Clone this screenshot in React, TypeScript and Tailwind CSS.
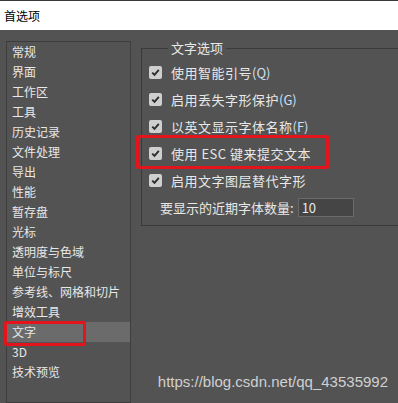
import React from 'react';

const font = { fontFamily: '"Microsoft YaHei", "Noto Sans CJK SC", "Noto Sans", sans-serif' };

const listItems = [
  '常规',
  '界面',
  '工作区',
  '工具',
  '历史记录',
  '文件处理',
  '导出',
  '性能',
  '暂存盘',
  '光标',
  '透明度与色域',
  '单位与标尺',
  '参考线、网格和切片',
  '增效工具',
  '文字',
  '3D',
  '技术预览',
];

const options: { label: string; key?: string; boxed?: boolean }[] = [
  { label: '使用智能引号', key: '(Q)' },
  { label: '启用丢失字形保护', key: '(G)' },
  { label: '以英文显示字体名称', key: '(F)' },
  { label: '使用 ESC 键来提交文本', boxed: true },
  { label: '启用文字图层替代字形' },
];

const CheckBox: React.FC = () => (
  <span className="flex h-[13px] w-[13px] shrink-0 items-center justify-center rounded-[2px] bg-[#cfcfcf]">
    <svg width="9" height="9" viewBox="0 0 9 9">
      <path d="M1.2 4.6 L3.5 6.8 L7.8 1.8" fill="none" stroke="#2e2e2e" strokeWidth="1.9" />
    </svg>
  </span>
);

const App: React.FC = () => {
  return (
    <div className="relative flex h-[403px] w-[398px] flex-col overflow-hidden bg-[#535353] text-[12px]" style={font}>
      {/* title bar */}
      <div className="flex h-[30px] shrink-0 items-center border-t border-[#3a3a3a] bg-white pl-[4px] text-[12px] text-black">
        首选项
      </div>

      <div className="flex flex-1">
        {/* category list */}
        <div className="ml-[6px] mt-[11px] w-[125px] shrink-0 border border-[#3d3d3d]">
          {listItems.map((item) => (
            <div
              key={item}
              className={`relative flex h-[20px] items-center pl-[5px] text-[#e8e8e8] ${item === '文字' ? 'bg-[#6b6b6b]' : ''}`}
            >
              {item}
              {item === '文字' && (
                <span className="absolute left-[-3px] top-[-1px] h-[25px] w-[82px] rounded-[2px] border-[3px] border-[#e3141c]" />
              )}
            </div>
          ))}
        </div>

        {/* text options group */}
        <fieldset className="ml-[10px] mt-[10px] h-[186px] w-[270px] shrink-0 border border-[#3a3a3a] px-[7px] pt-[3px]">
          <legend className="ml-[19px] px-[3px] text-[13px] leading-[16px] text-[#e8e8e8]">文字选项</legend>
          {options.map((o) => (
            <div key={o.label} className="relative flex h-[27px] items-center gap-[9px] text-[13px] tracking-[0.5px] text-[#e8e8e8]">
              <CheckBox />
              <span>
                {o.label}
                {o.key && <span className="tracking-normal text-[#cfe0f2]">{o.key}</span>}
              </span>
              {o.boxed && (
                <span className="absolute left-[-13px] top-[-5px] h-[34px] w-[193px] rounded-[2px] border-[3px] border-[#e3141c]" />
              )}
            </div>
          ))}
          <div className="flex h-[27px] items-center pl-[11px] text-[13px] text-[#e8e8e8]">
            <span>要显示的近期字体数量:</span>
            <div className="ml-[4px] flex h-[19px] w-[56px] items-center border border-[#6a6a6a] bg-[#454545] pl-[3px] text-[#e8e8e8]">
              10
            </div>
          </div>
        </fieldset>
      </div>

      {/* watermark */}
      <div
        className="absolute bottom-[10px] right-[10px] text-[15px] text-[#d0d0d0]"
        style={{ fontFamily: '"Liberation Sans", Arial, sans-serif' }}
      >
        https://blog.csdn.net/qq_43535992
      </div>
    </div>
  );
};

export default App;
